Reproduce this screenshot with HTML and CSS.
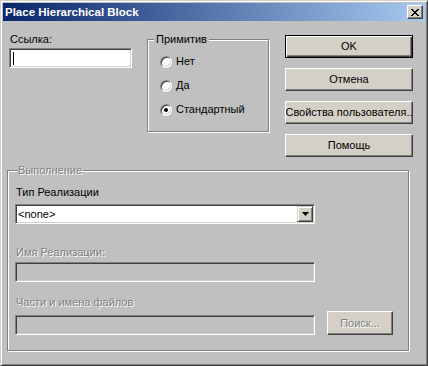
FILE: index.html
```html
<!DOCTYPE html>
<html lang="ru">
<head>
    <meta charset="UTF-8">
    <title>Place Hierarchical Block</title>
    <link rel="stylesheet" href="styles.css">
</head>
<body>
    <div class="window">
        <!-- Title bar -->
        <div class="titlebar">
            <span class="title">Place Hierarchical Block</span>
            <span class="close-btn">
                <svg width="8" height="7" viewBox="0 0 8 7">
                    <path d="M0 0h2v1h-2zM6 0h2v1h-2zM1 1h2v1h-2zM5 1h2v1h-2zM2 2h4v1h-4zM3 3h2v1h-2zM2 4h4v1h-4zM1 5h2v1h-2zM5 5h2v1h-2zM0 6h2v1h-2zM6 6h2v1h-2z" fill="#000"/>
                </svg>
            </span>
        </div>

        <div class="dialog-body">
            <div class="top-row">
                <!-- Link -->
                <div class="link-col">
                    <div class="label">Ссылка:</div>
                    <div class="edit"><span class="caret"></span></div>
                </div>

                <!-- Primitive -->
                <div class="group primitive">
                    <span class="group-title">Примитив</span>
                    <div class="radio-list">
                        <div class="radio-row"><span class="radio"></span>Нет</div>
                        <div class="radio-row"><span class="radio"></span>Да</div>
                        <div class="radio-row"><span class="radio checked"></span>Стандартный</div>
                    </div>
                </div>

                <!-- Buttons -->
                <div class="buttons">
                    <div class="btn default">OK</div>
                    <div class="btn">Отмена</div>
                    <div class="btn">Свойства пользователя..</div>
                    <div class="btn">Помощь</div>
                </div>
            </div>

            <!-- Implementation -->
            <div class="group impl">
                <span class="group-title disabled">Выполнение</span>
                <div class="label impl-type">Тип Реализации</div>
                <div class="combo">
                    <span class="combo-text">&lt;none&gt;</span>
                    <span class="combo-btn">
                        <svg width="7" height="4" viewBox="0 0 7 4"><path d="M0 0h7l-3.5 4z" fill="#000"/></svg>
                    </span>
                </div>
                <div class="label disabled impl-name">Имя Реализации:</div>
                <div class="edit off"></div>
                <div class="label disabled impl-files">Части и имена файлов</div>
                <div class="files-row">
                    <div class="edit off"></div>
                    <div class="btn small disabled">Поиск...</div>
                </div>
            </div>
        </div>
    </div>
</body>
</html>
```

FILE: styles.css
```css
/* Reset */
* {
    margin: 0;
    padding: 0;
    box-sizing: border-box;
}

body {
    font-family: "Liberation Sans", Arial, sans-serif;
    font-size: 11px;
    line-height: 13px;
    color: #000;
    background: #c0c0c0;
}

/* Window frame */
.window {
    width: 428px;
    height: 366px;
    background: #c0c0c0;
    border: 1px solid;
    border-color: #d4d0c8 #404040 #404040 #d4d0c8;
    box-shadow: inset 1px 1px #fff, inset -1px -1px #808080;
    padding: 2px;
    display: flex;
    flex-direction: column;
}

.titlebar {
    height: 18px;
    display: flex;
    align-items: center;
    justify-content: space-between;
    padding: 0 2px 0 2px;
    background: linear-gradient(to right, #0a246a, #a6caf0);
}

.title {
    color: #fff;
    font-weight: bold;
    font-size: 11.5px;
}

.close-btn {
    width: 16px;
    height: 14px;
    display: flex;
    align-items: center;
    justify-content: center;
    background: #d4d0c8;
    border: 1px solid;
    border-color: #fff #404040 #404040 #fff;
    box-shadow: inset -1px -1px #808080;
}

/* Common controls */
.label {
    height: 13px;
    white-space: nowrap;
}

.disabled {
    color: #808080;
    text-shadow: 1px 1px #fff;
}

.edit {
    height: 20px;
    background: #fff;
    border: 1px solid;
    border-color: #808080 #fff #fff #808080;
    box-shadow: inset 1px 1px #404040, inset -1px -1px #d4d0c8;
    padding: 3px 2px;
}

.edit.off {
    background: #c0c0c0;
    width: 300px;
}

.caret {
    display: block;
    width: 1px;
    height: 13px;
    margin-left: 1px;
    background: #000;
}

.btn {
    width: 128px;
    height: 23px;
    display: flex;
    align-items: center;
    justify-content: center;
    white-space: nowrap;
    overflow: hidden;
    background: #d4d0c8;
    border: 1px solid;
    border-color: #fff #404040 #404040 #fff;
    box-shadow: inset -1px -1px #808080;
}

.btn.default {
    border-color: #000;
    box-shadow: inset 1px 1px #fff, inset -1px -1px #404040, inset -2px -2px #808080;
}

/* Group boxes */
.group {
    border: 1px solid #808080;
    box-shadow: inset 1px 1px #fff, 1px 1px #fff;
    display: flex;
    flex-direction: column;
}

.group-title {
    align-self: flex-start;
    margin: -7px 0 0 6px;
    padding: 0 2px;
    height: 13px;
    background: #c0c0c0;
}

/* Top row */
.dialog-body {
    display: flex;
    flex-direction: column;
}

.top-row {
    display: flex;
    align-items: flex-start;
    margin-top: 12px;
    padding-left: 6px;
}

.link-col {
    width: 123px;
}

.link-col .label {
    padding-left: 1px;
}

.link-col .edit {
    margin-top: 2px;
}

.primitive {
    width: 122px;
    height: 93px;
    margin: 6px 0 0 15px;
}

.radio-list {
    display: flex;
    flex-direction: column;
    gap: 11px;
    margin-top: 9px;
    padding-left: 12px;
}

.radio-row {
    display: flex;
    align-items: center;
    gap: 4px;
    height: 13px;
}

.radio {
    width: 12px;
    height: 12px;
    border-radius: 50%;
    background: #fff;
    border: 1px solid;
    border-color: #808080 #fff #fff #808080;
    box-shadow: inset 1px 1px #404040, inset -1px -1px #d4d0c8;
    display: flex;
    align-items: center;
    justify-content: center;
}

.radio.checked::after {
    content: "";
    width: 4px;
    height: 4px;
    border-radius: 50%;
    background: #000;
}

.buttons {
    display: flex;
    flex-direction: column;
    gap: 10px;
    margin: 2px 0 0 16px;
}

/* Implementation group */
.impl {
    width: 402px;
    height: 181px;
    margin: 13px 0 0 4px;
    padding-left: 7px;
}

.impl .group-title {
    margin-left: 2px;
    padding: 0 1px;
}

.impl .label {
    padding-left: 1px;
}

.impl-type {
    margin-top: 9px;
}

.combo {
    width: 300px;
    height: 20px;
    margin-top: 5px;
    background: #fff;
    border: 1px solid;
    border-color: #808080 #fff #fff #808080;
    box-shadow: inset 1px 1px #404040, inset -1px -1px #d4d0c8;
    padding: 1px;
    display: flex;
    align-items: center;
    justify-content: space-between;
}

.combo-text {
    padding-left: 1px;
}

.combo-btn {
    width: 16px;
    height: 16px;
    display: flex;
    align-items: center;
    justify-content: center;
    background: #d4d0c8;
    border: 1px solid;
    border-color: #d4d0c8 #404040 #404040 #d4d0c8;
    box-shadow: inset 1px 1px #fff, inset -1px -1px #808080;
}

.impl-name {
    margin-top: 22px;
}

.impl-name + .edit {
    margin-top: 3px;
}

.impl-files {
    margin-top: 14px;
}

.files-row {
    display: flex;
    align-items: flex-end;
    gap: 12px;
    margin-top: 2px;
}

.btn.small {
    width: 66px;
    height: 24px;
}
```
